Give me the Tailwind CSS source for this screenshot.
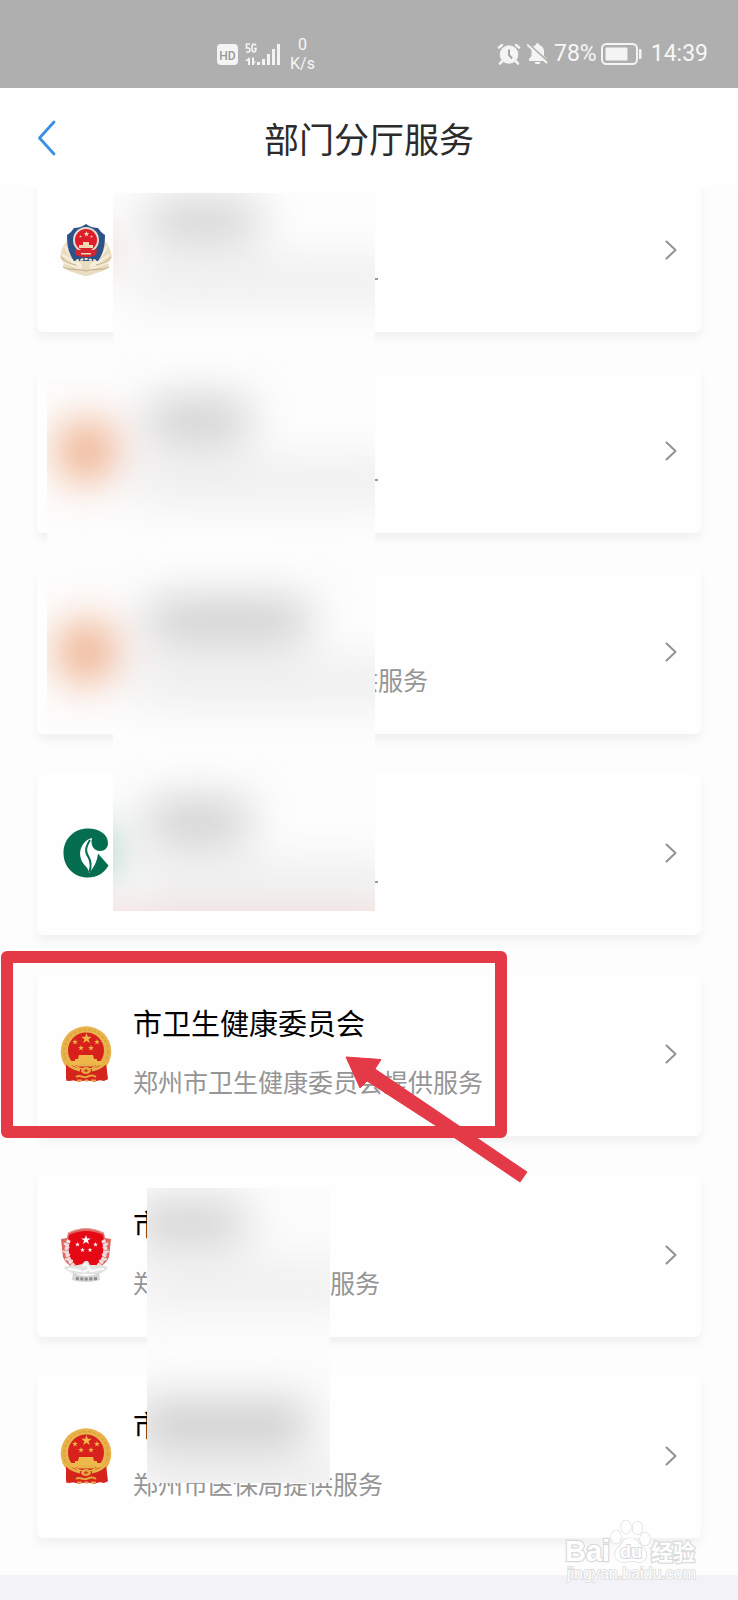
<!DOCTYPE html>
<html lang="zh-CN">
<head>
<meta charset="utf-8">
<meta name="viewport" content="width=device-width, initial-scale=1">
<title>部门分厅服务</title>
<script src="https://cdn.jsdelivr.net/npm/@tailwindcss/browser@4"></script>
</head>
<body class="relative min-h-screen overflow-x-hidden bg-[#f3f2f9] font-['Noto_Sans_CJK_SC',sans-serif] text-black">

<!-- Shared icon symbols -->
<svg class="hidden" aria-hidden="true">
  <symbol id="chev" viewBox="0 0 12 20"><path d="M1.5 1.500 10.500 10l-9 8.500" fill="none" stroke="#929292" stroke-width="2" stroke-linecap="round" stroke-linejoin="round"/></symbol>
  <symbol id="star" viewBox="-10 -10 20 20"><path d="M0-10 2.400-3.100 9.500-3.100 3.800 1.200 5.900 8.100 0 3.900-5.900 8.100-3.800 1.200-9.500-3.100-2.400-3.100Z"/></symbol>
  <symbol id="emblem" viewBox="0 0 52 56">
    <path d="M6 36 46 36 47 54 40 54 34 55.500 26 54 18 55.500 12 54 6.500 55Z" fill="#d62718"/>
    <circle cx="26" cy="25.500" r="25.300" fill="#e9b34c"/>
    <circle cx="26" cy="25.500" r="22" fill="none" stroke="#dea03a" stroke-width="1.500" stroke-dasharray="3 2"/>
    <circle cx="26" cy="24.500" r="18" fill="#d8201c"/>
    <g fill="#efb84a"><use href="#star" x="21" y="7" width="11" height="11"/><use href="#star" x="12" y="13" width="6" height="6"/><use href="#star" x="34" y="13" width="6" height="6"/><use href="#star" x="18" y="19" width="6" height="6"/><use href="#star" x="28" y="19" width="6" height="6"/>
    <path d="M19 29h14l1 4h3v2h5V39h-32v-4H15v-2h3Z"/></g>
    <path d="M6 38c5 1 9 2 13 5h14c4-3 8-4 13-5l2 15-4 2-5-1-4 1.500-8-1.500-8 1.500-4-1.500-6 1-3-2Z" fill="#d4241b"/>
    <path d="M4 34c5 7 10 9 16 10M48 34c-5 7-10 9-16 10M17 39h18" fill="none" stroke="#e8b24a" stroke-width="3"/>
    <ellipse cx="26" cy="44.500" rx="5" ry="3.500" fill="#e6aa40"/><path d="m23.500 45 2.500-2 2.500 2-2.500 1Z" fill="#cf3a20"/>
    <path d="M16 51c4-3 6 1 10 0s6-3 10 0M17 54.500h5m3 0h3m3 0h5" fill="none" stroke="#e5a63d" stroke-width="2"/>
  </symbol>
  <symbol id="police" viewBox="0 0 54 54">
    <path d="M8 17c-3 4-6 8-6 13l-1 2c1 3 2 5 4 7l-1 3c2 3 5 5 9 6 5 1 10 4 14 4s9-3 14-4c4-1 7-3 9-6l-1-3c2-2 3-4 4-7l-1-2c0-5-3-9-6-13Z" fill="#e9dcc0"/>
    <path d="M3 31c6 2 10 7 20 13M5 39c7 1 12 4 19 8M6 22c3 7 7 13 17 20M51 31c-6 2-10 7-20 13M49 39c-7 1-12 4-19 8M48 22c-3 7-7 13-17 20" fill="none" stroke="#f6eedb" stroke-width="2"/>
    <path d="M4 43c7 4 14 1 23 4 9-3 16 0 23-4M2 33c4 5 9 7 15 8M52 33c-4 5-9 7-15 8" fill="none" stroke="#c6b48d" stroke-width="1.200"/>
    <path d="M27 0c4 3 9 4 12 4 2 3 4 5 7 7 0 9-1 18-7 26H15C9 29 8 20 8 11c3-2 5-4 7-7 3 0 8-1 12-4Z" fill="#2d5288"/>
    <circle cx="27" cy="16" r="13" fill="#ecd9cd"/>
    <circle cx="27" cy="16" r="11" fill="#dd1d28"/>
    <path d="m16 25 4 1h14l4-1-1 6-6 2h-8l-6-2Z" fill="#d32631"/>
    <g fill="#f2d8b4"><use href="#star" x="24.500" y="7" width="6" height="6"/><use href="#star" x="20" y="11" width="3" height="3"/><use href="#star" x="31" y="11" width="3" height="3"/><path d="M24 18h6v3h4v3H20v-3h4ZM22 29h10v1.500H22Z"/></g>
    <path d="M17 37c3-2 5 0 7-2h6c2 2 4 0 7 2" stroke="#eee3cc" stroke-width="2" stroke-dasharray="3 1.500" fill="none"/>
  </symbol>
  <symbol id="leaf" viewBox="0 0 46 50">
    <path d="M25 .5C11 .5.5 11 .5 25S11 49.500 25 49.500c9 0 16-4 20.500-12L35 25.500c-1 9-5 15-9 19.500 0-4-3-6-6-10-7-11 0-23 9-25-2 7 2 13 8 13 5 0 8-3.500 8-8C45 6 36 .5 25 .5Z" fill="#066e50"/>
    <path d="M27 12c-5 8-5 12-1 18 2 4 2 9 .5 14" fill="none" stroke="#066e50" stroke-width="2"/>
  </symbol>
  <symbol id="justice" viewBox="0 0 52 54">
    <path d="M8 5Q26-4 44 5l1 5 6 1-2 18c-2 6-8 9-12 13H15C11 38 5 35 3 29L1 11l6-1Z" fill="#e0675f"/>
    <path d="M9 7Q26-1 43 7l1 7-2 19-6 4H16l-6-4-2-19Z" fill="#e50915"/>
    <path d="M8 5Q26-4 44 5" fill="none" stroke="#eba49d" stroke-width="1.200"/>
    <g fill="#fff"><use href="#star" x="21" y="7" width="10" height="10"/><use href="#star" x="15" y="14" width="5" height="5"/><use href="#star" x="33" y="14" width="5" height="5"/><use href="#star" x="20" y="19.500" width="5" height="5"/><use href="#star" x="27.500" y="19.500" width="5" height="5"/></g>
    <path d="M9 12C4 22 7 33 18 42M43 12c5 10 2 21-9 30" fill="none" stroke="#f1dee0" stroke-width="4" stroke-dasharray="3 .6"/>
    <path d="m4 15 5 5m-6 3 7 4m-5 4 8 2m35-18-5 5m6 3-7 4m5 4-8 2" stroke="#eadadb" stroke-width="2"/>
    <path d="M4 39c6-2 9 0 14-2l4-1 3-3h3l2 4c6 0 11 0 18 2-1 4-5 4-8 7H13c-3-3-8-3-9-7Z" fill="#e3e3e2"/>
    <path d="M8 41c8 0 9 2 14 2m22-2c-8 0-9 2-14 2M23 38l3-2 4 5-7 3" fill="none" stroke="#fff" stroke-width="2"/>
    <path d="M13 45q13 6 26 0l1 7q-14 4-28 0Z" fill="#d6d6d5"/><path d="M16 50.500q10 1 21 0" fill="none" stroke="#8d8d8d" stroke-width="3" stroke-dasharray="3 1.500"/>
  </symbol>
</svg>

<!-- Phone status bar -->
<div class="flex h-[88px] items-center bg-[#afafaf] pt-5 pr-[30px] pl-[217px] font-[Roboto,sans-serif] text-white/90">
  <svg class="h-[21px] w-[21px]" viewBox="0 0 21 21"><rect width="21" height="21" rx="4" fill="#f4f4f4"/><text x="10.500" y="15.500" text-anchor="middle" font-family="Roboto" font-weight="500" font-size="12" fill="#999">HD</text></svg>
  <svg class="ml-[7px] h-[24px] w-[35px]" viewBox="0 0 35 24" fill="#f4f4f4"><path d="M1 2h4M1.500 2v4h1.500q2 0 2 2t-2 2H1M11 3.500Q10 2 8.500 2 7 2.500 7 6t1.500 4q2.500 0 2.500-3.500H9" fill="none" stroke="#f4f4f4" stroke-width="1.600"/>
    <path d="M12 20h3v3h-3zM17 17h3v6h-3zM22 12h3v11h-3zM27 7h3v16h-3zM32 2h3v21h-3zM3 16h2v7H3zM0 19l4-3.500V19zM7 15.500h2V23H7zM8 19.500h3L8 23z"/></svg>
  <div class="ml-[10px] flex flex-col items-center text-[16px] leading-[19px]"><span>0</span><span>K/s</span></div>
  <svg class="ml-auto h-[22px] w-[24px]" viewBox="0 0 24 22"><g fill="none" stroke="#f4f4f4" stroke-width="2.500" stroke-linecap="round"><path d="M2 4.500 5 2M22 4.500 19 2M5.500 18 3 20.500M18.500 18l2.500 2.500"/></g><circle cx="12" cy="11.500" r="9.300" fill="#f4f4f4"/><path d="M12 6.500v5.500l3 3.500" fill="none" stroke="#a5a5a5" stroke-width="2"/></svg>
  <svg class="ml-[6px] h-[22px] w-[21px]" viewBox="0 0 21 22"><path d="M2 18V16l2.500-3V8C4.500 4.500 7 2.500 9 2V.5h3V2c3 .8 5 3 5 6v5l3 3v2ZM7.500 19h6c-.5 3-5.500 3-6 0Z" fill="#f4f4f4"/><path d="m1 .5 21 19" stroke="#afafaf" stroke-width="2"/><path d="m0 1.500 20 18.500" stroke="#f4f4f4" stroke-width="2"/></svg>
  <span class="ml-[6px] text-[23px] leading-7">78%</span>
  <svg class="ml-1 h-[22px] w-[41px]" viewBox="0 0 41 22"><rect x="1" y="1" width="35" height="20" rx="4.500" fill="none" stroke="#f4f4f4" stroke-width="2"/><rect x="4.500" y="4.500" width="22" height="13" rx="1" fill="#f4f4f4"/><path d="M38 6h1.500q1 0 1 1v8q0 1-1 1H38z" fill="#f4f4f4"/></svg>
  <time class="ml-[9px] text-[23px] leading-7">14:39</time>
</div>

<header class="relative z-10 flex h-[100px] items-center justify-center bg-[#fefefe]">
  <button class="absolute left-[37px] h-9 w-5" aria-label="返回"><svg class="h-full w-full" viewBox="0 0 20 36"><path d="M17 2 2.500 18 17 34" fill="none" stroke="#3c8fe2" stroke-width="2.800" stroke-linecap="round" stroke-linejoin="round"/></svg></button>
  <h1 class="text-[35px] leading-[50px] text-[#2b2b2b]">部门分厅服务</h1>
</header>

<main class="-mt-5 flex flex-col gap-[37px] bg-[#fdfdfd] px-[37px] pb-[37px]">
  <a href="#" aria-label="公安服务" class="flex h-[164px] items-center rounded-md bg-[#fefefe] pr-[24px] pl-[22px] shadow-[0_6px_10px_rgba(0,0,0,0.05)]">
    <svg class="mt-[2px] h-[54px] w-[54px]"><use href="#police"/></svg>
    <span class="mt-[57px] ml-[262px] h-[2px] w-[3px] bg-[#999]"></span>
    <svg class="ml-auto h-5 w-3"><use href="#chev"/></svg>
  </a>
  <a href="#" aria-label="部门服务" class="flex h-[164px] items-center rounded-md bg-[#fefefe] pr-[24px] pl-[22px] shadow-[0_6px_10px_rgba(0,0,0,0.05)]">
    <span class="mt-[57px] ml-[316px] h-[2px] w-[3px] bg-[#999]"></span>
    <svg class="ml-auto h-5 w-3"><use href="#chev"/></svg>
  </a>
  <a href="#" class="flex h-[164px] items-center rounded-md bg-[#fefefe] pr-[24px] pl-[22px] shadow-[0_6px_10px_rgba(0,0,0,0.05)]">
    <span class="mt-[53px] ml-[294px] text-[25px] leading-10 text-[#959595]">供服务</span>
    <svg class="ml-auto h-5 w-3"><use href="#chev"/></svg>
  </a>
  <a href="#" aria-label="烟草服务" class="flex h-[164px] items-center rounded-md bg-[#fefefe] pr-[24px] pl-[26px] shadow-[0_6px_10px_rgba(0,0,0,0.05)]">
    <svg class="h-[50px] w-[46px]"><use href="#leaf"/></svg>
    <span class="mt-[57px] ml-[266px] h-[2px] w-[3px] bg-[#999]"></span>
    <svg class="ml-auto h-5 w-3"><use href="#chev"/></svg>
  </a>
  <a href="#" class="flex h-[164px] items-center rounded-md bg-[#fefefe] pr-[24px] pl-[22px] shadow-[0_6px_10px_rgba(0,0,0,0.05)]">
    <svg class="h-14 w-[54px]"><use href="#emblem"/></svg>
    <span class="mb-[6px] ml-5 flex flex-col gap-[19px] whitespace-nowrap"><span class="text-[29px] leading-10">市卫生健康委员会</span><span class="text-[25px] leading-10 text-[#959595]">郑州市卫生健康委员会提供服务</span></span>
    <svg class="ml-auto h-5 w-3"><use href="#chev"/></svg>
  </a>
  <a href="#" class="flex h-[164px] items-center rounded-md bg-[#fefefe] pr-[24px] pl-[22px] shadow-[0_6px_10px_rgba(0,0,0,0.05)]">
    <svg class="h-[54px] w-[54px]"><use href="#justice"/></svg>
    <span class="mb-[6px] ml-5 flex flex-col gap-[19px] whitespace-nowrap"><span class="text-[29px] leading-10">市</span><span class="flex gap-[172px] text-[25px] leading-10 text-[#959595]"><span>郑</span><span>服务</span></span></span>
    <svg class="ml-auto h-5 w-3"><use href="#chev"/></svg>
  </a>
  <a href="#" class="flex h-[164px] items-center rounded-md bg-[#fefefe] pr-[24px] pl-[22px] shadow-[0_6px_10px_rgba(0,0,0,0.05)]">
    <svg class="h-14 w-[54px]"><use href="#emblem"/></svg>
    <span class="mb-[6px] ml-5 flex flex-col gap-[19px] whitespace-nowrap"><span class="text-[29px] leading-10">市</span><span class="text-[25px] leading-10 text-[#959595]">郑州市医保局提供服务</span></span>
    <svg class="ml-auto h-5 w-3"><use href="#chev"/></svg>
  </a>
</main>

<!-- Privacy masks over department names -->
<div class="pointer-events-none absolute top-[193px] left-[47px] z-20 h-[718px] w-[328px] overflow-hidden [clip-path:polygon(66px_0,100%_0,100%_100%,66px_100%,66px_538px,0_538px,0_185px,66px_185px)]" aria-hidden="true">
  <svg class="h-full w-full" viewBox="47 193 328 718">
    <defs><filter id="soft" x="-50%" y="-50%" width="200%" height="200%"><feGaussianBlur stdDeviation="23"/></filter></defs>
    <rect x="47" y="193" width="328" height="718" fill="#fdfdfd"/>
    <g filter="url(#soft)">
      <g fill="#cacaca"><rect x="148" y="203" width="110" height="36"/><rect x="148" y="400" width="100" height="42"/><rect x="148" y="600" width="160" height="42"/><rect x="148" y="801" width="100" height="42"/></g>
      <g fill="#ebebeb"><rect x="134" y="262" width="270" height="38"/><rect x="134" y="463" width="270" height="38"/><rect x="134" y="664" width="290" height="38"/><rect x="134" y="865" width="270" height="38"/></g>
      <g fill="#eb9c70"><circle cx="87" cy="451" r="29"/><circle cx="87" cy="652" r="29"/></g>
      <circle cx="91" cy="853" r="24" fill="#7cb9a9"/><circle cx="86" cy="250" r="22" fill="#e6bcbc"/>
      <rect x="30" y="926" width="380" height="16" fill="#e98383"/>
    </g>
  </svg>
</div>
<div class="pointer-events-none absolute top-[1188px] left-[147px] z-20 h-[295px] w-[183px]" aria-hidden="true">
  <svg class="h-full w-full" viewBox="147 1188 183 295">
    <rect x="147" y="1188" width="183" height="295" fill="#fcfcfc"/>
    <g filter="url(#soft)"><g fill="#cacaca"><rect x="135" y="1204" width="110" height="38"/><rect x="138" y="1402" width="170" height="46"/></g><g fill="#ececec"><rect x="134" y="1266" width="230" height="38"/><rect x="134" y="1466" width="230" height="38"/></g></g>
  </svg>
</div>

<!-- Highlight frame and arrow -->
<div class="pointer-events-none absolute top-[951px] left-px z-30 h-[187px] w-[506px] rounded-md border-12 border-[#e43a47]"></div>
<svg class="pointer-events-none absolute top-[1050px] left-[340px] z-30 h-[140px] w-[200px]" viewBox="340 1050 200 140" aria-hidden="true"><path d="M346 1057 381 1059.500 375 1069 527 1172 520 1182 455 1138 367 1081 360 1088Z" fill="#e43a47" stroke="#e43a47" stroke-width="1"/></svg>

<!-- Corner watermark -->
<svg class="pointer-events-none absolute top-[1516px] right-[34px] z-30 h-[72px] w-[140px]" viewBox="564 1516 140 72" aria-label="Baidu经验">
  <g fill="#fefefe" stroke="#dadada" stroke-width="1.200" paint-order="stroke">
    <g font-family="Liberation Sans" font-weight="700" stroke-width="2.500"><text x="565" y="1561" font-size="29">Bai</text><text x="567" y="1579" font-size="16" font-weight="400" stroke-width="1.500">jingyan.baidu.com</text></g>
    <text x="651" y="1560" font-family="Noto Sans CJK SC" font-weight="700" font-size="22" stroke-width="2.500">经验</text>
    <ellipse cx="616" cy="1537" rx="5" ry="6.500"/><ellipse cx="626" cy="1527" rx="5" ry="6.500"/><ellipse cx="637.500" cy="1528" rx="5" ry="6.500"/><ellipse cx="645" cy="1539" rx="5" ry="6.500"/>
    <path d="M630 1538c-6 0-7 5-11 9-4 3-5 7-3 11 4 7 10 3 15 3s11 4 15-3c1-4 0-8-4-11-4-4-6-9-12-9Z"/>
    <text x="620" y="1558" font-family="Liberation Sans" font-weight="700" font-size="18" stroke-width="2">du</text>
  </g>
</svg>
</body>
</html>
